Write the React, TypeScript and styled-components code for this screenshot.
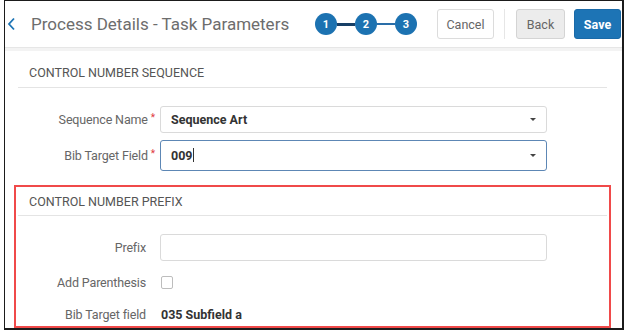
import React from 'react';
import styled, { createGlobalStyle } from 'styled-components';

const GlobalStyle = createGlobalStyle`
  html, body {
    margin: 0;
    padding: 0;
    background: #ffffff;
  }
  body {
    font-family: Roboto, "Liberation Sans", Arial, sans-serif;
  }
`;

const Frame = styled.div`
  box-sizing: border-box;
  margin-left: 4px;
  width: 620px;
  height: 330px;
  border: 1.5px solid #1b1b1b;
  border-right-width: 2px;
  border-bottom-width: 2px;
  display: flex;
  flex-direction: column;
  overflow: hidden;
`;

const Header = styled.header`
  display: flex;
  align-items: center;
  height: 48px;
  padding: 0 0 0 2px;
  border-bottom: 1px solid #e6e6e6;
  white-space: nowrap;
  & > * {
    flex-shrink: 0;
  }
`;

const BackArrow = styled.span`
  display: flex;
  align-items: center;
  width: 18px;
  margin-right: 6px;
`;

const Title = styled.h1`
  margin: 0;
  width: 258px;
  font-size: 17px;
  font-weight: 400;
  color: #6d6d6d;
`;

const Steps = styled.div`
  display: flex;
  align-items: center;
  margin-left: 26px;
`;

const Step = styled.div`
  width: 22px;
  height: 22px;
  border-radius: 50%;
  background: #1c72b1;
  color: #ffffff;
  font-size: 11px;
  font-weight: 700;
  display: flex;
  align-items: center;
  justify-content: center;
`;

const Connector = styled.div<{ $done?: boolean }>`
  width: 18px;
  height: ${(p) => (p.$done ? 3 : 2)}px;
  background: ${(p) => (p.$done ? '#173f66' : '#2a6ea8')};
`;

const Actions = styled.div`
  display: flex;
  align-items: center;
  margin-left: 20px;
`;

const Button = styled.button<{ $variant?: 'plain' | 'muted' | 'primary'; $w: number }>`
  box-sizing: border-box;
  width: ${(p) => p.$w}px;
  height: 30px;
  padding: 0;
  border-radius: 3px;
  font-family: Roboto, "Liberation Sans", Arial, sans-serif;
  font-size: 12.5px;
  cursor: pointer;
  border: 1px solid
    ${(p) => (p.$variant === 'primary' ? '#1a6aa8' : p.$variant === 'muted' ? '#d4d4d4' : '#dcdcdc')};
  background: ${(p) => (p.$variant === 'primary' ? '#1d74b5' : p.$variant === 'muted' ? '#ececec' : '#ffffff')};
  color: ${(p) => (p.$variant === 'primary' ? '#ffffff' : '#666666')};
  font-weight: ${(p) => (p.$variant === 'primary' ? 700 : 400)};
  & + & {
    margin-left: 9px;
  }
`;

const VDivider = styled.div`
  width: 1px;
  height: 30px;
  background: #e6e6e6;
  margin: 0 11px 0 10px;
`;

const Strip = styled.div`
  height: 3px;
  background: #f3f3f3;
`;

const Body = styled.main`
  display: flex;
  flex-direction: column;
  padding: 0 11px 0 9px;
`;

const Section = styled.section<{ $highlight?: boolean }>`
  box-sizing: border-box;
  display: flex;
  flex-direction: column;
  border: 2px solid ${(p) => (p.$highlight ? '#f04a4a' : 'transparent')};
  padding: 0 2px 0 2px;
  overflow: hidden;
`;

const SectionTitle = styled.h2<{ $h: number; $pt: number }>`
  box-sizing: border-box;
  flex-shrink: 0;
  margin: 0;
  display: flex;
  align-items: center;
  height: ${(p) => p.$h}px;
  padding: ${(p) => p.$pt}px 0 0 11px;
  font-size: 12.5px;
  font-weight: 400;
  color: #555555;
  border-bottom: 1px solid #e4e4e4;
  text-transform: uppercase;
`;

const Rows = styled.div<{ $top: number }>`
  display: flex;
  flex-direction: column;
  padding-top: ${(p) => p.$top}px;
`;

const Row = styled.div<{ $h: number }>`
  display: grid;
  grid-template-columns: 137px 1fr;
  align-items: center;
  column-gap: 5px;
  flex-shrink: 0;
  height: ${(p) => p.$h}px;
`;

const Label = styled.label<{ $required?: boolean }>`
  text-align: right;
  font-size: 12.5px;
  color: #666666;
  letter-spacing: -0.15px;
  padding-right: ${(p) => (p.$required ? 0 : 9)}px;
`;

const Star = styled.span`
  color: #e0393e;
  font-size: 10px;
  margin-left: 3px;
  vertical-align: 3px;
`;

const Field = styled.div<{ $focused?: boolean; $h: number }>`
  box-sizing: border-box;
  width: 387px;
  height: ${(p) => p.$h}px;
  border: ${(p) => (p.$focused ? '1.5px solid #5d87b5' : '1px solid #dadada')};
  border-radius: 3px;
  display: flex;
  align-items: center;
  justify-content: space-between;
  padding: 0 10px 0 10px;
  font-size: 12.5px;
  font-weight: 700;
  color: #333333;
`;

const Caret = styled.span`
  width: 0;
  height: 0;
  border-left: 3px solid transparent;
  border-right: 3px solid transparent;
  border-top: 3px solid #444444;
`;

const Cursor = styled.span`
  display: inline-block;
  width: 1px;
  height: 14px;
  background: #333333;
  vertical-align: -2px;
`;

const Checkbox = styled.span`
  box-sizing: border-box;
  width: 12px;
  height: 13px;
  border: 1px solid #bdbdbd;
  border-radius: 2px;
  margin-left: 1px;
`;

const Value = styled.span`
  font-size: 12.5px;
  font-weight: 700;
  color: #333333;
  padding-left: 1px;
`;

export default function App() {
  return (
    <>
      <GlobalStyle />
      <Frame>
        <Header>
          <BackArrow>
            <svg width="9" height="14" viewBox="0 0 9 14">
              <path d="M7 1.5 L2 7 L7 12.5" fill="none" stroke="#1d74b5" strokeWidth="1.8" />
            </svg>
          </BackArrow>
          <Title>Process Details - Task Parameters</Title>
          <Steps>
            <Step>1</Step>
            <Connector $done />
            <Step>2</Step>
            <Connector />
            <Step>3</Step>
          </Steps>
          <Actions>
            <Button $variant="plain" $w={57}>
              Cancel
            </Button>
            <VDivider />
            <Button $variant="muted" $w={49}>
              Back
            </Button>
            <Button $variant="primary" $w={47}>
              Save
            </Button>
          </Actions>
        </Header>
        <Strip />
        <Body>
          <Section>
            <SectionTitle $h={35} $pt={4}>Control Number Sequence</SectionTitle>
            <Rows $top={14}>
              <Row $h={35}>
                <Label $required>
                  Sequence Name<Star>*</Star>
                </Label>
                <Field $h={27}>
                  <span>Sequence Art</span>
                  <Caret />
                </Field>
              </Row>
              <Row $h={36}>
                <Label $required>
                  Bib Target Field<Star>*</Star>
                </Label>
                <Field $h={31} $focused>
                  <span>
                    009
                    <Cursor />
                  </span>
                  <Caret />
                </Field>
              </Row>
            </Rows>
          </Section>
          <Section $highlight style={{ marginTop: 10, height: 143 }}>
            <SectionTitle $h={29} $pt={0}>Control Number Prefix</SectionTitle>
            <Rows $top={13}>
              <Row $h={36}>
                <Label>Prefix</Label>
                <Field $h={27} />
              </Row>
              <Row $h={34}>
                <Label>Add Parenthesis</Label>
                <Checkbox />
              </Row>
              <Row $h={30}>
                <Label>Bib Target field</Label>
                <Value>035 Subfield a</Value>
              </Row>
            </Rows>
          </Section>
        </Body>
      </Frame>
    </>
  );
}
